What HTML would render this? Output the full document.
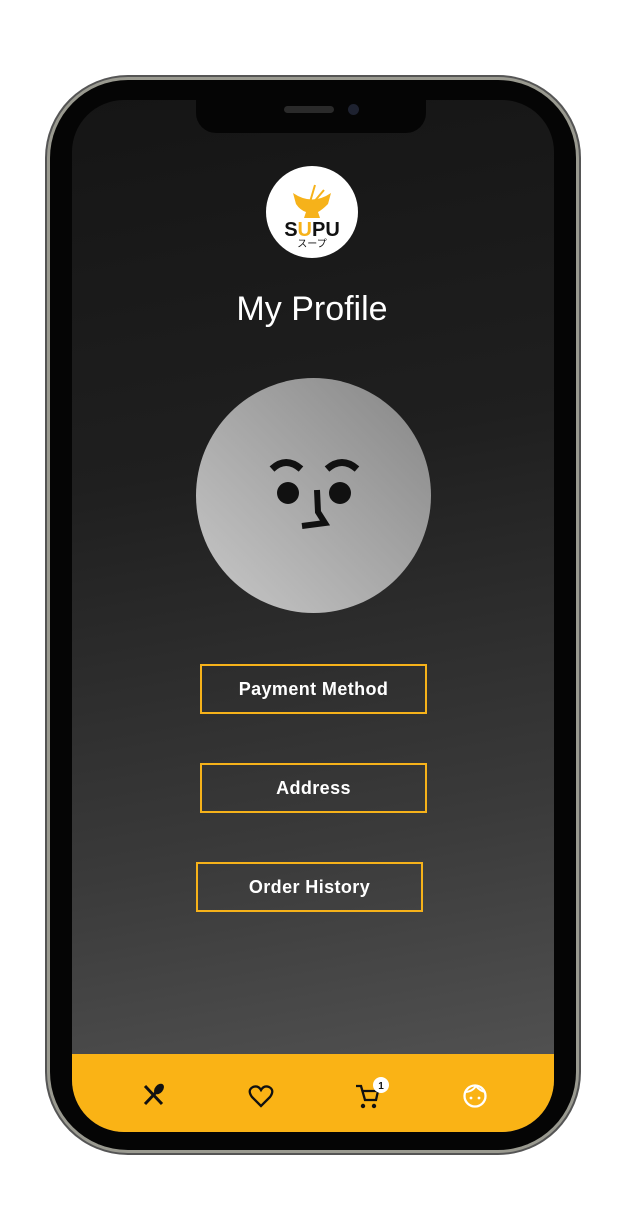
<!DOCTYPE html>
<html><head><style>
body{margin:0;width:632px;height:1229px;background:#fff;position:relative;overflow:hidden;font-family:"Liberation Sans",sans-serif}
.frame{position:absolute;left:50px;top:80px;width:526px;height:1070px;border-radius:78px;background:#050505;box-shadow:0 0 0 3px #9a9a90,0 0 0 5px #555;}
.screen{position:absolute;left:72px;top:100px;width:482px;height:1032px;border-radius:52px;overflow:hidden;background:linear-gradient(170deg,#151515 0%,#1f1f1f 35%,#3a3a3a 70%,#575757 100%)}
.notch{position:absolute;left:196px;top:100px;width:230px;height:33px;background:#050505;border-radius:0 0 20px 20px}
.btn{position:absolute;border:2px solid #f6b21a;box-sizing:border-box;width:227px;height:50px;color:#fff;font-weight:bold;font-size:18px;letter-spacing:0.4px;text-align:center;line-height:46px;background:transparent}
.bar{position:absolute;left:72px;top:1054px;width:482px;height:78px;background:#fab315;border-radius:0 0 52px 52px}
</style></head><body>
<div class="frame"></div>
<div class="screen"></div>
<div class="notch"><div style="position:absolute;left:88px;top:6px;width:50px;height:7px;border-radius:4px;background:#2a2a2a"></div><div style="position:absolute;left:152px;top:4px;width:11px;height:11px;border-radius:50%;background:#1e2230"></div></div>
<div style="position:absolute;left:266px;top:166px;width:92px;height:92px;border-radius:50%;background:#fff"></div>
<svg style="position:absolute;left:266px;top:166px" width="92" height="92">
<path d="M27 27 Q46 40 65 27 L62 38 Q56 44 52 46 L54 52 L38 52 L40 46 Q34 44 30 38Z" fill="#f6b21a"/>
<path d="M44 36 L49 19 M47 37 L58 24" stroke="#f6b21a" stroke-width="2"/>
<text x="46" y="70" text-anchor="middle" font-family="Liberation Sans" font-weight="bold" font-size="20" fill="#111">S<tspan fill="#f6b21a">U</tspan>PU</text>
<text x="46" y="81" text-anchor="middle" font-family="Noto Sans CJK JP" font-size="10" fill="#111">スープ</text>
</svg>
<div style="position:absolute;left:0;width:624px;top:290px;text-align:center;color:#fff;font-size:34px">My Profile</div>
<div style="position:absolute;left:196px;top:378px;width:235px;height:235px;border-radius:50%;background:linear-gradient(225deg,#868686,#c8c8c8)"></div>
<svg style="position:absolute;left:196px;top:378px" width="235" height="235">
<path d="M76 91 Q90 78 105 91" stroke="#111" stroke-width="7" fill="none"/>
<path d="M131 91 Q146 78 161 91" stroke="#111" stroke-width="7" fill="none"/>
<circle cx="92" cy="115" r="11" fill="#111"/><circle cx="144" cy="115" r="11" fill="#111"/>
<path d="M121 112 L122 134 L129 145 L106 148" stroke="#111" stroke-width="6" fill="none"/>
</svg>
<div class="btn" style="left:200px;top:664px">Payment Method</div>
<div class="btn" style="left:200px;top:763px">Address</div>
<div class="btn" style="left:196px;top:862px">Order History</div>
<div class="bar"></div>
<svg style="position:absolute;left:0;top:1070px" width="632" height="50">
<path d="M145 16 L162 34 M162 16 L145 34" stroke="#111" stroke-width="3"/>
<ellipse cx="159" cy="19" rx="4" ry="6" transform="rotate(40 159 19)" fill="#111"/>
<path d="M261 36 L252 27 Q247 20 253 17 Q258 15 261 20 Q264 15 269 17 Q275 20 270 27Z" fill="none" stroke="#111" stroke-width="2.3"/>
<path d="M356 16 L361 16 L365 30 L376 30 L378 21 L362 21" fill="none" stroke="#111" stroke-width="2.3"/>
<circle cx="363" cy="36" r="2.2" fill="#111"/><circle cx="374" cy="36" r="2.2" fill="#111"/>
<circle cx="381" cy="15" r="8" fill="#fff"/><text x="381" y="19" text-anchor="middle" font-size="10" font-weight="bold" font-family="Liberation Sans" fill="#111">1</text>
<circle cx="475" cy="26" r="10.5" fill="none" stroke="#fff" stroke-width="2.3"/>
<path d="M465 22 Q472 22 476 16 Q480 21 485 22" fill="none" stroke="#fff" stroke-width="2"/>
<circle cx="471" cy="28" r="1.4" fill="#fff"/><circle cx="479" cy="28" r="1.4" fill="#fff"/>
</svg>
</body></html>
